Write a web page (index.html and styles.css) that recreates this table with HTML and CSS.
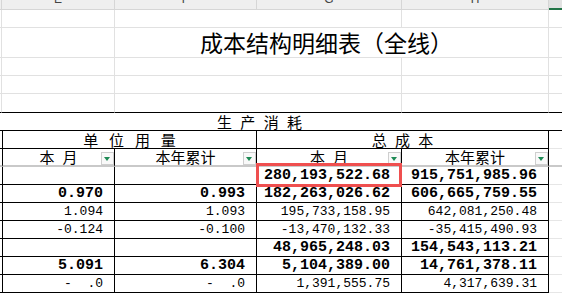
FILE: index.html
```html
<!DOCTYPE html>
<html lang="zh">
<head>
<meta charset="utf-8">
<title>成本结构明细表</title>
<link rel="stylesheet" href="styles.css">
</head>
<body>
<div class="sheet">
  <div class="row hdr">
    <div class="c"></div>
    <div class="c"><span class="letter">E</span></div>
    <div class="c"><span class="letter">F</span></div>
    <div class="c"><span class="letter">G</span></div>
    <div class="c"><span class="letter">H</span></div>
    <div class="c sel"></div>
  </div>
  <div class="row top">
    <div class="c"></div><div class="c"></div><div class="c span2"></div><div class="c"></div><div class="c last"></div>
  </div>
  <div class="row top title-row">
    <div class="c"></div><div class="c"></div><div class="c span3 title">成本结构明细表（全线）</div><div class="c last"></div>
  </div>
  <div class="row top">
    <div class="c"></div><div class="c"></div><div class="c span2"></div><div class="c"></div><div class="c last"></div>
  </div>
  <div class="row top">
    <div class="c"></div><div class="c"></div><div class="c span2"></div><div class="c"></div><div class="c last"></div>
  </div>
  <div class="row top r5">
    <div class="c"></div><div class="c"></div><div class="c span2"></div><div class="c"></div><div class="c last"></div>
  </div>

  <div class="drow group">
    <div class="c full">生 产 消 耗</div>
  </div>
  <div class="drow">
    <div class="c"></div>
    <div class="c span2 cn spaced">单 位 用 量</div>
    <div class="c span2 cn spaced2">总 成 本</div>
    <div class="c last"></div>
  </div>
  <div class="drow filt">
    <div class="c"></div>
    <div class="c cn fcell">本 月<span class="fbtn"></span></div>
    <div class="c cn fcell">本年累计<span class="fbtn"></span></div>
    <div class="c cn fcell">本 月<span class="fbtn"></span></div>
    <div class="c cn fcell">本年累计<span class="fbtn"></span></div>
    <div class="c last"></div>
  </div>

  <div class="drow data">
    <div class="c"></div>
    <div class="c num b"></div>
    <div class="c num b"></div>
    <div class="c num b">280,193,522.68</div>
    <div class="c num b">915,751,985.96</div>
    <div class="c last"></div>
  </div>
  <div class="drow data">
    <div class="c"></div>
    <div class="c num b">0.970</div>
    <div class="c num b">0.993</div>
    <div class="c num b">182,263,026.62</div>
    <div class="c num b">606,665,759.55</div>
    <div class="c last"></div>
  </div>
  <div class="drow data">
    <div class="c"></div>
    <div class="c num">1.094</div>
    <div class="c num">1.093</div>
    <div class="c num">195,733,158.95</div>
    <div class="c num">642,081,250.48</div>
    <div class="c last"></div>
  </div>
  <div class="drow data">
    <div class="c"></div>
    <div class="c num">-0.124</div>
    <div class="c num">-0.100</div>
    <div class="c num">-13,470,132.33</div>
    <div class="c num">-35,415,490.93</div>
    <div class="c last"></div>
  </div>
  <div class="drow data">
    <div class="c"></div>
    <div class="c num b"></div>
    <div class="c num b"></div>
    <div class="c num b">48,965,248.03</div>
    <div class="c num b">154,543,113.21</div>
    <div class="c last"></div>
  </div>
  <div class="drow data">
    <div class="c"></div>
    <div class="c num b">5.091</div>
    <div class="c num b">6.304</div>
    <div class="c num b">5,104,389.00</div>
    <div class="c num b">14,761,378.11</div>
    <div class="c last"></div>
  </div>
  <div class="drow data">
    <div class="c"></div>
    <div class="c num">-&nbsp;&nbsp;.0</div>
    <div class="c num">-&nbsp;&nbsp;.0</div>
    <div class="c num">1,391,555.75</div>
    <div class="c num">4,317,639.31</div>
    <div class="c last"></div>
  </div>

  <div class="redbox"></div>
</div>
</body>
</html>
```
FILE: styles.css
```css
html, body {
  margin: 0;
  padding: 0;
  background: #ffffff;
}
body {
  width: 562px;
  height: 293px;
  overflow: hidden;
  font-family: "Noto Sans CJK SC", "Noto Sans", sans-serif;
  color: #000;
}
.sheet {
  position: relative;
  width: 562px;
}
.row {
  display: grid;
  grid-template-columns: 2px 113px 142px 145px 147px 1fr;
  height: 18px;
}
.row > .c {
  box-sizing: border-box;
  border-right: 1px solid #e1e1e1;
  border-bottom: 1px solid #e1e1e1;
  overflow: hidden;
  white-space: nowrap;
}
.row > .last { border-right: none; }
.span2 { grid-column: span 2; }
.span3 { grid-column: span 3; }

.hdr {
  height: 10px;
  background: #efefef;
}
.hdr > .c {
  border-right-color: #d6d6d6;
  border-bottom-color: #d6d6d6;
  text-align: center;
}
.hdr > .sel {
  border-right: none;
  background: #e2e2e2;
  border-bottom: 2px solid #217346;
}
.letter {
  display: block;
  margin-top: -7px;
  font-family: "Liberation Sans", sans-serif;
  font-size: 12px;
  line-height: 12px;
  color: #444;
}
.title-row { height: 30px; }
.title {
  font-size: 23px;
  line-height: 28px;
  padding-left: 85px;
  overflow: visible;
}
.r5 { height: 19px; }
.r5 > .c { border-bottom-color: #000; }

.drow {
  display: grid;
  grid-template-columns: 3px 112px 142px 145px 147px 1fr;
  height: 18px;
}
.drow > .c {
  box-sizing: border-box;
  border-right: 1px solid #000;
  border-bottom: 1px solid #000;
  white-space: nowrap;
  line-height: 17px;
}
.drow > .last {
  border-right: none;
  border-bottom-color: #e6e6e6;
}
.group > .full {
  grid-column: 1 / -1;
  border-right: none;
  padding-left: 217px;
  text-align: left;
  font-size: 15px;
  word-spacing: 5px;
}
.cn {
  font-size: 15px;
  text-align: center;
  word-spacing: 4.6px;
}
.spaced { word-spacing: 7.4px; }
.spaced2 { word-spacing: 5px; }
.filt > .c { border-bottom: 2px solid #c9c9c9; line-height: 16px; }
.filt > .last { border-bottom: 2px solid #c9c9c9; }
.fcell { position: relative; }
.fbtn {
  position: absolute;
  right: 0;
  top: 3px;
  width: 13px;
  height: 13px;
  box-sizing: border-box;
  border: 1px solid #cfcfcf;
  background: #f9f9f9;
}
.fbtn::after {
  content: "";
  position: absolute;
  left: 2px;
  top: 4px;
  border-left: 3.5px solid transparent;
  border-right: 3.5px solid transparent;
  border-top: 4px solid #1e8a55;
}
.num {
  text-align: right;
  padding-right: 11px;
  font-family: "Liberation Mono", monospace;
  font-size: 13px;
}
.num.b {
  font-weight: bold;
  font-size: 15px;
}
.redbox {
  position: absolute;
  left: 256px;
  top: 163px;
  width: 146px;
  height: 24px;
  box-sizing: border-box;
  border: 3px solid #ef4f4f;
}
```
